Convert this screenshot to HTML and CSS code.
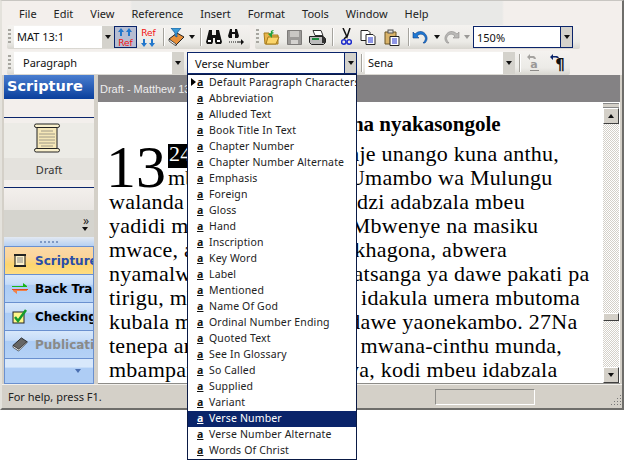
FILE: index.html
```html
<!DOCTYPE html>
<html lang="en">
<head>
<meta charset="utf-8">
<title>Scripture</title>
<link rel="stylesheet" href="styles.css">
</head>
<body>
<div class="window">
  <nav class="menubar">
    <span>File</span><span>Edit</span><span>View</span><span>Reference</span><span>Insert</span><span>Format</span><span>Tools</span><span>Window</span><span>Help</span>
  </nav>

  <div class="toolrow row-one">
    <div class="toolbar tb-a">
      <i class="grip"></i>
      <div class="combo w-ref"><span class="val">MAT 13:1</span><b class="drop"><i class="tri"></i></b></div>
      <div class="tool active w-23">
        <svg width="21" height="21" viewBox="0 0 21 21"><path d="M6 1l3 4H7v4H5V5H3zM14 1l3 4h-2v4h-2V5h-2z" fill="#2277cc"/><text x="10.5" y="19" class="reftxt">Ref</text></svg>
      </div>
      <div class="tool w-22">
        <svg width="21" height="21" viewBox="0 0 21 21"><text x="10.5" y="9" class="reftxt">Ref</text><path d="M6 20l3-4H7v-4H5v4H3zM14 20l3-4h-2v-4h-2v4h-2z" fill="#2277cc"/></svg>
      </div>
      <i class="sep sep-a"></i>
      <div class="tool w-24">
        <svg width="17" height="18" viewBox="0 0 17 18"><path d="M1 11l8-6 7 4-8 8z" fill="#e8903a" stroke="#222"/><path d="M1 11v2l7 5v-2z" fill="#fff" stroke="#222" stroke-width=".7"/><path d="M3 0h10L9 5v4L7 8V5z" fill="#3b9bd8" stroke="#14508c" stroke-width=".7"/></svg>
      </div>
      <i class="tri sm-drop"></i>
      <i class="sep sep-b"></i>
      <div class="tool w-26">
        <svg width="16" height="15" viewBox="0 0 16 15"><path d="M3 0h3v5h4V0h3l3 12-1 2h-5l-1-2V8H7v4l-1 2H1l-1-2z" fill="#111"/><rect x="2" y="10" width="3" height="2" fill="#fff"/><rect x="11" y="10" width="3" height="2" fill="#fff"/></svg>
      </div>
      <div class="tool w-18">
        <svg width="16" height="16" viewBox="0 0 16 16"><path d="M2 0h2v3h3V0h2l2 7-1 2H7V5H4v4H1L0 7z" fill="#111"/><path d="M1 13h1m1 0h1m1 0h1m1 0h1m1 0h4" stroke="#111" fill="none"/><path d="M13 10l3 3-3 3z" fill="#111"/></svg>
      </div>
    </div>
    <div class="toolbar tb-b">
      <i class="grip"></i>
      <div class="tool w-22">
        <svg width="17" height="16" viewBox="0 0 17 16"><path d="M1 4h5l1 2h8v9H2z" fill="#e9b44a" stroke="#a67c1c"/><path d="M3 15l2-7h11l-3 7z" fill="#fbd56a" stroke="#a67c1c"/><path d="M9 9L5 5l3-1C7 2 9 1 11 1L9 3c1 0 2 1 2 1L9 5z" fill="#22a03a"/></svg>
      </div>
      <div class="tool w-24">
        <svg width="15" height="15" viewBox="0 0 15 15"><path d="M.5.5h14v14H.5z" fill="#9c9a98" stroke="#7d7b79"/><rect x="3" y="1" width="9" height="6" fill="#c9c7c4"/><rect x="4" y="10" width="7" height="4" fill="#d4d2cf"/></svg>
      </div>
      <div class="tool w-22">
        <svg width="17" height="15" viewBox="0 0 17 15"><path d="M4 .5h8l2 5H6z" fill="#fff" stroke="#333"/><path d="M.5 6.500h14l2 2v4l-2 2h-12l-2-2z" fill="#bbb" stroke="#222"/><rect x="3" y="8" width="7" height="2" fill="#1b8a3e"/><path d="M13 7h3v6h-3z" fill="#333"/></svg>
      </div>
      <i class="sep sep-c"></i>
      <div class="tool w-26">
        <svg width="11" height="18" viewBox="0 0 11 18"><path d="M2 0l4 9 3-9M3 11l4-4" stroke="#111" stroke-width="1.500" fill="none"/><circle cx="2.800" cy="14" r="2.200" fill="none" stroke="#1d2ccc" stroke-width="1.500"/><circle cx="8.200" cy="14" r="2.200" fill="none" stroke="#1d2ccc" stroke-width="1.500"/></svg>
      </div>
      <div class="tool w-18">
        <svg width="16" height="15" viewBox="0 0 16 15"><path d="M1 .5h7l2 2v8H1z" fill="#fff" stroke="#222"/><path d="M6 4.500h7l2 2v8H6z" fill="#fff" stroke="#222"/><path d="M8 8h5M8 10h5M8 12h5" stroke="#1d2ccc"/></svg>
      </div>
      <div class="tool w-29">
        <svg width="16" height="17" viewBox="0 0 16 17"><path d="M1 3h11v12H1z" fill="#d9b36a" stroke="#6b5424"/><rect x="4" y="1" width="5" height="3" fill="#ddd" stroke="#555"/><path d="M6 7.500h9v9H6z" fill="#fff" stroke="#222"/><path d="M8 10h5M8 12h5M8 14h5" stroke="#1d2ccc"/></svg>
      </div>
      <i class="sep sep-d"></i>
      <div class="tool w-22">
        <svg width="16" height="14" viewBox="0 0 16 14"><path d="M1 2v6h6L5 6c3-3 7-2 8 1 1 2 0 4-2 6h2c2-2 3-5 1-8C12 1 7 0 3 4z" fill="#1e78d2" stroke="#0e3f8c" stroke-width=".6"/></svg>
      </div>
      <i class="tri tri-u"></i>
      <div class="tool w-16">
        <svg width="16" height="14" viewBox="0 0 16 14"><path d="M15 2v6H9l2-2C8 3 4 4 3 7c-1 2 0 4 2 6H3C1 11 0 8 2 5c2-4 7-5 11-1z" fill="#b9b8b6" stroke="#8d8c8a" stroke-width=".6"/></svg>
      </div>
      <i class="tri tri-r"></i>
      <div class="combo focus w-zoom"><span class="val">150%</span><b class="drop"><i class="tri"></i></b></div>
    </div>
  </div>

  <div class="toolrow row-two">
    <div class="toolbar tb-c">
      <i class="grip"></i>
      <div class="combo w-para"><span class="val ind">Paragraph</span><b class="drop"><i class="tri"></i></b></div>
      <div class="combo focus w-style"><span class="val wide">Verse Number</span><b class="drop"><i class="tri"></i></b></div>
      <i class="sep sep-e"></i>
      <div class="combo w-font"><span class="val">Sena</span><b class="drop"><i class="tri"></i></b></div>
      <i class="sep sep-f"></i>
      <div class="tool w-26">
        <svg width="14" height="18" viewBox="0 0 14 18"><path d="M1 3l3-3v2h4a4 4 0 0 1 2 3l-2 0a2 2 0 0 0-1-1H4v2z" fill="#a5a3a0"/><text x="8" y="14" class="ta">a</text><path d="M4 16.500h9" stroke="#8d8b88"/></svg>
      </div>
      <div class="tool w-23">
        <svg width="16" height="18" viewBox="0 0 16 18"><path d="M0 3l3-3v2h4a3 3 0 0 1 2 2l-2 0a2 2 0 0 0-1-.500H3V6z" fill="#0a246a"/><text x="10" y="16" class="tp">¶</text></svg>
      </div>
    </div>
  </div>

  <div class="main">
    <aside class="side">
      <h2 class="side-title">Scripture</h2>
      <div class="shelf">
        <div class="shelf-gap"></div>
        <div class="shelf-item">
          <svg width="28" height="30" viewBox="0 0 28 30"><path d="M4 3h20v24H4z" fill="#f5e7b8" stroke="#222"/><rect x="1.500" y="1" width="25" height="3.500" rx="1.700" fill="#f9f0cc" stroke="#222"/><rect x="1.500" y="25.500" width="25" height="3.500" rx="1.700" fill="#f9f0cc" stroke="#222"/><path d="M8 8h12M6 11h16M6 14h16M6 17h16M6 20h16M8 23h12" stroke="#a09a88"/></svg>
        </div>
        <div class="shelf-label">Draft</div>
        <div class="shelf-gap2"></div>
      </div>
      <div class="more"><span>»</span><i class="tri"></i></div>
      <div class="sash"><span></span></div>
      <div class="nav on">
        <svg width="16" height="15" viewBox="0 0 16 15"><path d="M3 2h10v11H3z" fill="#fff2c8" stroke="#111"/><path d="M2 1h12v2H2zM2 12h12v2H2z" fill="#222"/><path d="M5 5h6M5 7h6M5 9h6" stroke="#888"/></svg>
        <span class="blue">Scripture</span>
      </div>
      <div class="nav">
        <svg width="16" height="15" viewBox="0 0 16 15"><path d="M0 5h11V2l4 3v1H0z" fill="#19b619"/><path d="M0 8h16v1H0z" fill="#e04a20"/><path d="M1 9h14v1H5v3l-4-3z" fill="#f0824a"/></svg>
        <span>Back Translation</span>
      </div>
      <div class="nav">
        <svg width="16" height="15" viewBox="0 0 16 15"><rect x="1" y="3" width="11" height="11" fill="#fff68a" stroke="#222"/><path d="M3 8l3 4 8-11" stroke="#169c2c" stroke-width="2.500" fill="none"/></svg>
        <span>Checking</span>
      </div>
      <div class="nav">
        <svg width="16" height="15" viewBox="0 0 17 16"><path d="M1 9l9-8 6 4-9 9z" fill="#666" stroke="#222"/><path d="M1 9v2l6 4 9-9V5l-9 8z" fill="#f2f2f2" stroke="#222" stroke-width=".7"/></svg>
        <span class="grey">Publication</span>
      </div>
      <div class="nav-end"><i class="tri"></i></div>
    </aside>

    <section class="editor">
      <header class="doc-title">Draft - Matthew 13</header>
      <div class="doc">
        <div class="page">
          <h3 class="head">Ntsanzo na nyakasongole</h3>
          <p class="text"><span class="cap">13</span><span class="vn">24</span>Yesu apanga ntsanje unango kuna anthu,<br>mbalonga, iye kuti: Umambo wa Mulungu<br>walanda munthu wa nda bodzi adabzala mbeu<br>yadidi m'munda wace iye. Mbwenye na masiku<br>mwace, ali pa kugona, ye akhagona, abwera<br>nyamalwa wace mbvera adatsanga ya dawe pakati pa<br>tirigu, mbaenda. 26Tsono a idakula umera mbutoma<br>kubala mbeu tenepa na ya dawe yaonekambo. 27Na<br>tenepa anyabasa a mbuya a mwana-cinthu munda,<br>mbampanga: Pyadidi Mbuya, kodi mbeu idabzala</p>
        </div>
        <div class="scroll">
          <div class="sb-cap"></div>
          <b class="sb-btn"><i class="tri up"></i></b>
          <div class="sb-track t1"></div>
          <div class="sb-thumb"></div>
          <div class="sb-track t2"></div>
          <b class="sb-btn"><i class="tri"></i></b>
        </div>
      </div>
    </section>
  </div>

  <footer class="status">
    <span class="help">For help, press F1.</span>
    <span class="pane"></span>
    <svg class="resize" width="13" height="13" viewBox="0 0 13 13"><path d="M11 1h1v1h-1zM8 4h1v1H8zM11 4h1v1h-1zM5 7h1v1H5zM8 7h1v1H8zM11 7h1v1h-1zM2 10h1v1H2zM5 10h1v1H5zM8 10h1v1H8zM11 10h1v1h-1z" fill="#777"/></svg>
  </footer>
</div>

<ul class="list">
  <li class="cur"><i class="mark"></i><b>a</b>Default Paragraph Characters</li>
  <li><b>a</b>Abbreviation</li>
  <li><b>a</b>Alluded Text</li>
  <li><b>a</b>Book Title In Text</li>
  <li><b>a</b>Chapter Number</li>
  <li><b>a</b>Chapter Number Alternate</li>
  <li><b>a</b>Emphasis</li>
  <li><b>a</b>Foreign</li>
  <li><b>a</b>Gloss</li>
  <li><b>a</b>Hand</li>
  <li><b>a</b>Inscription</li>
  <li><b>a</b>Key Word</li>
  <li><b>a</b>Label</li>
  <li><b>a</b>Mentioned</li>
  <li><b>a</b>Name Of God</li>
  <li><b>a</b>Ordinal Number Ending</li>
  <li><b>a</b>Quoted Text</li>
  <li><b>a</b>See In Glossary</li>
  <li><b>a</b>So Called</li>
  <li><b>a</b>Supplied</li>
  <li><b>a</b>Variant</li>
  <li class="sel"><b>a</b>Verse Number</li>
  <li><b>a</b>Verse Number Alternate</li>
  <li><b>a</b>Words Of Christ</li>
</ul>
</body>
</html>
```
FILE: styles.css
```css
* { box-sizing: border-box; }
html, body { margin: 0; padding: 0; background: #fff; }
body {
  width: 624px;
  height: 460px;
  overflow: hidden;
  position: relative;
  font: 11px "Noto Sans", Tahoma, sans-serif;
  color: #000;
}
.window {
  width: 624px;
  height: 410px;
  display: flex;
  flex-direction: column;
  background: #f3efec;
  border-top: 1px solid #c8c6c2;
  border-left: 2px solid #e4e2dc;
  border-right: 2px solid #6e6d6a;
  border-bottom: 2px solid #6e6d6a;
}
.menubar {
  height: 24px;
  flex: none;
  display: flex;
  align-items: center;
  padding-left: 17px;
  gap: 17px;
  background: linear-gradient(90deg, #f3efec 0, #f3efec 128px, #e9e9e7 130px, #e9e9e7 500px, #f3efec 502px);
  font-size: 11px;
  color: #222;
}
.toolrow { flex: none; display: flex; align-items: stretch; }
.row-one { height: 25px; padding-left: 5px; }
.row-two { height: 25px; padding-left: 5px; padding-top: 1px; }
.toolbar {
  display: flex;
  align-items: center;
  height: 24px;
  background: linear-gradient(180deg, #f4f2ef 0, #ecebe7 70%, #d8d6d0 100%);
  border-radius: 2px;
}
.tb-a { width: 243px; }
.tb-b { width: 325px; margin-left: 5px; }
.tb-c { width: 563px; }
.grip {
  width: 3px;
  height: 16px;
  margin: 0 3px 0 1px;
  flex: none;
  background: repeating-linear-gradient(180deg, #a8a6a0 0 2px, transparent 2px 4px);
}
.tb-b .grip { margin: 0 1px; }
.combo {
  display: flex;
  align-items: stretch;
  height: 22px;
  flex: none;
  background: #fff;
  font-size: 11px;
  color: #111;
}
.combo .val { flex: 1; padding-left: 3px; line-height: 21px; white-space: nowrap; overflow: hidden; }
.combo .val.ind { padding-left: 9px; }
.combo .val.wide { padding-left: 7px; }
.combo .drop {
  width: 12px;
  flex: none;
  background: #d4d2cc;
  display: flex;
  align-items: center;
  justify-content: center;
}
.combo.focus { border: 1px solid #0a246a; }
.combo.focus .drop { border-left: 1px solid #0a246a; }
.tri {
  display: inline-block;
  width: 0;
  height: 0;
  flex: none;
  border-left: 3.500px solid transparent;
  border-right: 3.500px solid transparent;
  border-top: 4px solid #111;
}
.tri.up { border-top: 0; border-bottom: 4px solid #111; }
.w-ref { width: 100px; }
.w-para { width: 170px; }
.w-style { width: 170px; margin-left: 3px; }
.w-font { width: 150px; }
.w-zoom { width: 100px; margin-left: 3px; }
.tool { display: flex; align-items: center; justify-content: center; height: 22px; flex: none; }
.tool.active { background: #b6bdd2; border: 1px solid #0a246a; }
.w-16 { width: 16px; }
.w-18 { width: 18px; }
.w-22 { width: 22px; }
.w-23 { width: 23px; }
.w-24 { width: 24px; }
.w-26 { width: 26px; }
.w-29 { width: 29px; }
.reftxt { font: 9px "DejaVu Sans", sans-serif; fill: #f01010; text-anchor: middle; }
.ta { font: bold 11px "DejaVu Sans", sans-serif; fill: #9a9896; text-anchor: middle; }
.tp { font: bold 15px "DejaVu Sans", sans-serif; fill: #111; text-anchor: middle; }
.sep { width: 1px; height: 18px; background: #a5a39d; flex: none; box-shadow: 1px 0 #fff; }
.sep-a { margin: 0 0 0 4px; }
.sep-b { margin: 0 0 0 5px; }
.sep-c { margin: 0 0 0 4px; }
.sep-d { margin: 0 0 0 2px; }
.sep-e { margin: 0 3px 0 4px; }
.sep-f { margin: 0 0 0 4px; }
.sm-drop { margin-left: 1px; }
.tri-u { margin: 0 4px 0 3px; }
.tri-r { margin: 0 0 0 4px; border-top-color: #9a9896; }
.main { flex: 1; min-height: 0; display: flex; background: #d4d0c8; padding-left: 2px; }
.side { width: 90px; flex: none; display: flex; flex-direction: column; }
.side-title {
  margin: 0;
  height: 24px;
  padding-left: 3px;
  background: linear-gradient(180deg, #4a7ed0, #0a3f9c);
  color: #fff;
  font: bold 14.500px/23px "DejaVu Sans", sans-serif;
  overflow: hidden;
  white-space: nowrap;
}
.shelf { height: 111px; flex: none; display: flex; flex-direction: column; background: #f3efec; }
.shelf-gap { height: 19px; border-bottom: 1px solid #0a246a; }
.shelf-item { height: 35px; margin-top: 5px; background: #ecebe6; display: flex; justify-content: center; align-items: flex-start; padding: 0 5px 0 0; }
.shelf-label { height: 22px; background: #e4e2dd; text-align: center; font-size: 11px; line-height: 23px; color: #333; }
.shelf-gap2 { flex: 1; margin-top: 7px; border-top: 1px solid #0a246a; background: linear-gradient(180deg, #f3efec, #e9e6e2); }
.more { height: 27px; flex: none; background: #d5d4ce; display: flex; flex-direction: column; align-items: flex-end; justify-content: center; padding-right: 6px; font-size: 12px; line-height: 8px; color: #222; }
.more span { display: block; margin-right: -1px; height: 10px; }
.sash { height: 9px; flex: none; background: linear-gradient(180deg, #e3e9f2, #b5d0f2); display: flex; justify-content: center; align-items: center; }
.sash span { width: 18px; height: 2px; background: repeating-linear-gradient(90deg, #7f99c4 0 2px, transparent 2px 4px); }
.nav {
  height: 28px;
  flex: none;
  display: flex;
  align-items: center;
  gap: 7px;
  padding-left: 7px;
  border-top: 1px solid #6a90cf;
  border-left: 1px solid #6a90cf;
  border-right: 1px solid #6a90cf;
  background: linear-gradient(180deg, #d8e8fb 0, #c6dcf8 35%, #acccf5 36%, #b5d2f6 100%);
  overflow: hidden;
  white-space: nowrap;
  font: bold 12px "DejaVu Sans", sans-serif;
  color: #000;
}
.nav svg { flex: none; }
.nav.on { background: linear-gradient(180deg, #fbd9a6 0, #fbd59c 35%, #fdd56e 65%, #fedc82 100%); }
.blue { color: #2a4da8; }
.grey { color: #8a8a88; }
.nav-end { flex: 1; display: flex; align-items: center; justify-content: flex-end; padding-right: 12px; border: 1px solid #6a90cf; background: linear-gradient(180deg, #d8e8fb 0, #d8e8fb 35%, #aecdf5 36%, #aecdf5 100%); }
.nav-end .tri { border-top-color: #4a6fb0; }
.editor { width: 522px; flex: none; margin-left: 4px; display: flex; flex-direction: column; height: 309px; border-bottom: 1px solid #8d8c88; }
.doc-title { height: 27px; flex: none; background: #848284; color: #eee; font: 11px/28px "Liberation Sans", Arial, sans-serif; padding-left: 2px; white-space: nowrap; overflow: hidden; }
.doc { flex: 1; min-height: 0; display: flex; background: #fff; }
.page { flex: 1; min-width: 0; overflow: hidden; padding: 12px 0 0 11px; font-family: "Liberation Serif", "Times New Roman", serif; color: #000; }
.head { margin: 0 0 8px; padding-left: 63px; font-size: 21px; line-height: 20px; text-align: center; font-weight: bold; white-space: nowrap; }
.text { margin: 0; font-size: 22px; line-height: 24px; letter-spacing: .25px; white-space: nowrap; }
.cap { float: left; width: 62px; height: 45px; margin: 2px 0 0 -3px; font-size: 60px; line-height: 46px; letter-spacing: 0; }
.vn { background: linear-gradient(#000, #000) no-repeat 0 2px / 100% 22px; box-shadow: 0 2px 0 #000; color: #fff; padding: 0 1px; display: inline-block; line-height: 24px; }
.scroll { width: 16px; flex: none; margin-right: 1px; display: flex; flex-direction: column; padding-top: 1px; }
.sb-cap { height: 5px; flex: none; border-top: 1px solid #888; border-bottom: 1px solid #888; background: #d4d0c8; }
.sb-btn { height: 16px; flex: none; background: #d4d0c8; border: 1px solid; border-color: #fff #404040 #404040 #fff; display: flex; align-items: center; justify-content: center; }
.sb-track { background: repeating-conic-gradient(#d4d0c8 0 25%, #fff 0 50%) 0 0 / 2px 2px; }
.t1 { flex: 189 1 0; }
.t2 { flex: 46 1 0; }
.sb-thumb { height: 8px; flex: none; background: #d4d0c8; border: 1px solid; border-color: #fff #404040 #404040 #fff; }
.status { height: 24px; flex: none; display: flex; align-items: center; background: #d4d0c8; border-top: 1px solid #f2f0ec; position: relative; }
.help { font-size: 11px; color: #222; padding-left: 6px; width: 433px; flex: none; }
.pane { width: 100px; height: 16px; border: 1px solid; border-color: #8d8c88 #fff #fff #8d8c88; flex: none; }
.resize { margin-left: auto; align-self: flex-end; margin-bottom: 1px; }
.list {
  position: absolute;
  left: 187px;
  top: 74px;
  width: 170px;
  height: 386px;
  margin: 0;
  padding: 0;
  list-style: none;
  background: #fff;
  border: 1px solid #0a1a45;
  font: 10.500px "Noto Sans", Tahoma, sans-serif;
  letter-spacing: .15px;
  color: #222;
}
.list li { height: 16px; line-height: 15px; padding-left: 21px; position: relative; white-space: nowrap; overflow: hidden; }
.list li b { position: absolute; left: 9px; top: 0; font-weight: bold; text-decoration: underline; color: #111; }
.list .sel { background: #0a246a; color: #fff; }
.list .sel b { color: #fff; }
.mark { position: absolute; left: 3px; top: 3px; width: 0; height: 0; border-top: 4px solid transparent; border-bottom: 4px solid transparent; border-left: 5px solid #000; }
```
